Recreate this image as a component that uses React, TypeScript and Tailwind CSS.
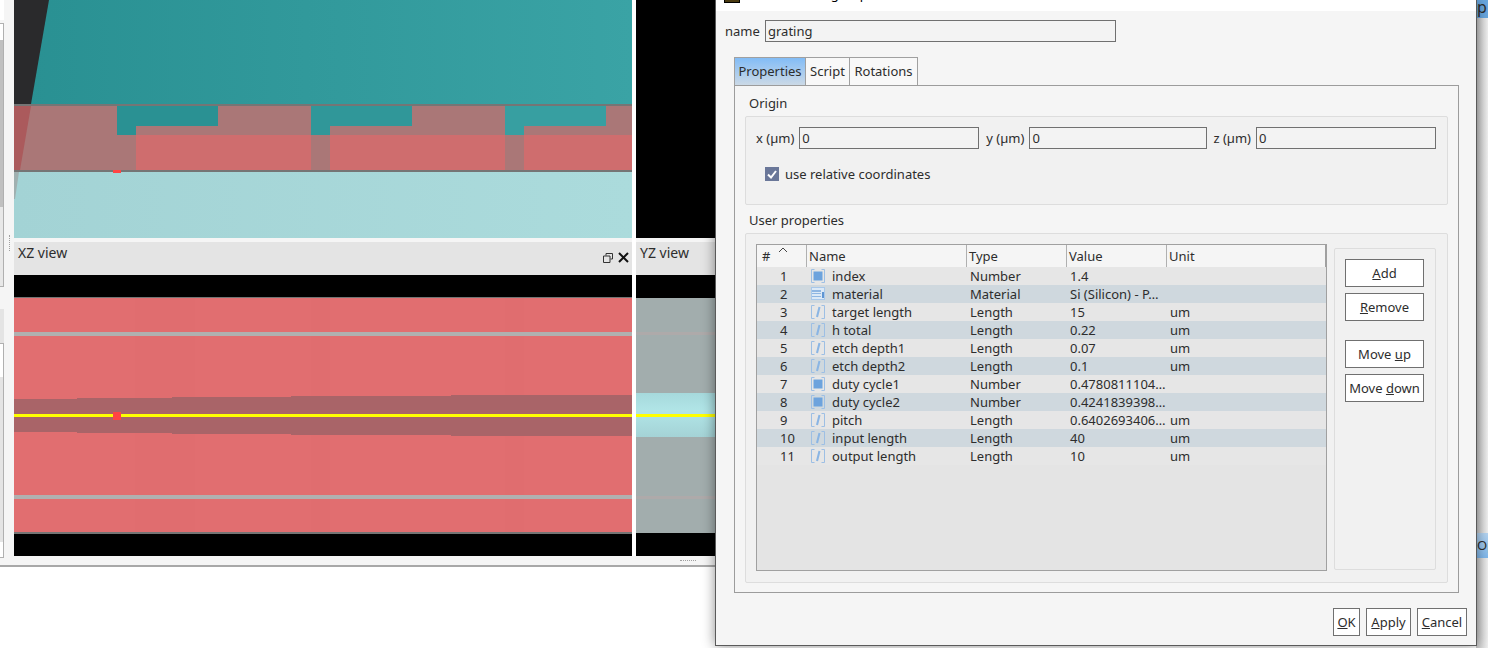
import type { ReactNode } from 'react'

const FONT = "font-['Noto_Sans','Open_Sans',sans-serif]"

type Kind = 'number' | 'material' | 'length'

const ROWS: { name: string; type: string; value: string; unit: string; kind: Kind }[] = [
  { name: 'index', type: 'Number', value: '1.4', unit: '', kind: 'number' },
  { name: 'material', type: 'Material', value: 'Si (Silicon) - P…', unit: '', kind: 'material' },
  { name: 'target length', type: 'Length', value: '15', unit: 'um', kind: 'length' },
  { name: 'h total', type: 'Length', value: '0.22', unit: 'um', kind: 'length' },
  { name: 'etch depth1', type: 'Length', value: '0.07', unit: 'um', kind: 'length' },
  { name: 'etch depth2', type: 'Length', value: '0.1', unit: 'um', kind: 'length' },
  { name: 'duty cycle1', type: 'Number', value: '0.4780811104…', unit: '', kind: 'number' },
  { name: 'duty cycle2', type: 'Number', value: '0.4241839398…', unit: '', kind: 'number' },
  { name: 'pitch', type: 'Length', value: '0.6402693406…', unit: 'um', kind: 'length' },
  { name: 'input length', type: 'Length', value: '40', unit: 'um', kind: 'length' },
  { name: 'output length', type: 'Length', value: '10', unit: 'um', kind: 'length' },
]

function RowIcon({ kind }: { kind: Kind }) {
  if (kind === 'material') {
    return (
      <svg width="15" height="14" viewBox="0 0 15 14" className="shrink-0">
        <rect x="0" y="0" width="14" height="13" fill="#a9c8ea" />
        <rect x="1" y="1" width="12" height="11" fill="#dce9f6" />
        <rect x="1" y="3" width="9" height="2" fill="#8fb6e2" />
        <rect x="1" y="6" width="9" height="1" fill="#8fb6e2" />
        <rect x="1" y="9" width="9" height="1" fill="#8fb6e2" />
        <rect x="11" y="5" width="2" height="6" fill="#5f95d2" />
      </svg>
    )
  }
  return (
    <svg width="15" height="14" viewBox="0 0 15 14" fill="none" className="shrink-0">
      <path d="M3.5 .5H.5V13.5H3.5M10.5 .5H13.5V13.5H10.5" stroke="#9dbfe4" />
      {kind === 'number' ? (
        <rect x="2.5" y="2.5" width="9" height="9" fill="#6da3dd" />
      ) : (
        <path d="M8.5 2L6 12" stroke="#8ab5e4" strokeWidth="2" />
      )}
    </svg>
  )
}

function Btn({ className, children }: { className: string; children: ReactNode }) {
  return (
    <div className={`flex h-[28px] items-center justify-center border border-[#707070] bg-white ${className}`}>
      {children}
    </div>
  )
}

function Field({ label, className }: { label: string; className: string }) {
  return (
    <>
      <span className="whitespace-nowrap">{label}</span>
      <div className={`flex h-[22px] items-center border border-[#707070] bg-[#f3f3f3] pl-[2px] ${className}`}>0</div>
    </>
  )
}

function XYView() {
  return (
    <svg width="618" height="238" viewBox="0 0 618 238" className="block">
      <defs>
        <linearGradient id="teal" x1="0" x2="1" y1="0" y2="0">
          <stop offset="0" stopColor="#299092" />
          <stop offset="1" stopColor="#3aa3a5" />
        </linearGradient>
        <linearGradient id="pale" x1="0" x2="1" y1="0" y2="0">
          <stop offset="0" stopColor="#a3d3d5" />
          <stop offset="1" stopColor="#abdbdc" />
        </linearGradient>
      </defs>
      <rect width="618" height="104" fill="url(#teal)" />
      <rect y="106" width="618" height="64" fill="#aa7777" />
      <rect y="172" width="618" height="66" fill="url(#pale)" />
      <path d="M103 106H204V126H122V135H103Z" fill="#2a9193" />
      <path d="M297 106H398V126H316V135H297Z" fill="#309799" />
      <path d="M491 106H592V126H510V135H491Z" fill="#379fa1" />
      <rect x="122" y="135" width="175" height="35" fill="#cf6d6e" />
      <rect x="316" y="135" width="175" height="35" fill="#cf6d6e" />
      <rect x="510" y="135" width="108" height="35" fill="#cf6d6e" />
      <rect y="104" width="618" height="2" fill="#757575" />
      <rect y="170" width="618" height="2" fill="#757575" />
      <path d="M0 0H35L17 104H0Z" fill="#2a2a2c" />
      <path d="M0 106H17L6 170H0Z" fill="#ab5a5c" />
      <path d="M0 172H5L1 199H0Z" fill="#a0b0b0" />
      <rect x="99" y="170" width="8" height="3" fill="#ff4444" />
    </svg>
  )
}

function XZView() {
  return (
    <svg width="618" height="237" viewBox="0 0 618 237" className="block">
      <rect width="618" height="237" fill="#e16e70" />
      <rect x="121" width="60" height="237" fill="#e06d6f" />
      <rect x="297" width="19" height="237" fill="#e06d6f" />
      <rect x="491" width="19" height="237" fill="#e06d6f" />
      <rect width="618" height="1" fill="#757575" />
      <rect y="35" width="618" height="4" fill="#b0b0b0" />
      <rect y="198" width="618" height="4" fill="#b0b0b0" />
      <path
        d="M0 102H63V101H158V100H277V99H437V98H618V139H437V138H277V137H158V136H63V135H0Z"
        fill="#a96468"
      />
      <rect y="117" width="618" height="3" fill="#ffff00" />
      <rect x="99" y="115" width="8" height="8" fill="#ff4444" />
      <rect y="235" width="618" height="2" fill="#757575" />
    </svg>
  )
}

function YZView() {
  return (
    <svg width="80" height="235" viewBox="0 0 80 235" className="block">
      <defs>
        <linearGradient id="band" x1="0" x2="0" y1="0" y2="1">
          <stop offset="0" stopColor="#a6d9dc" />
          <stop offset="0.4" stopColor="#b1e5e7" />
          <stop offset="1" stopColor="#a4d3d6" />
        </linearGradient>
      </defs>
      <rect width="80" height="235" fill="#a2adad" />
      <rect y="34" width="80" height="3" fill="#aeaaaa" />
      <rect y="198" width="80" height="3" fill="#aeaaaa" />
      <rect y="95" width="80" height="44" fill="url(#band)" />
      <rect y="116" width="80" height="3" fill="#ffff00" />
    </svg>
  )
}

function Dialog() {
  return (
    <div className="absolute left-[715px] top-0 flex h-[646px] w-[762px] flex-col border-x border-b border-[#5a5a5a] bg-[#f5f5f5] shadow-[0_0_12px_rgba(0,0,0,0.45)]">
      <div className="flex h-[11px] shrink-0 items-start gap-[5px] overflow-hidden bg-white pl-[8px]">
        <div className="h-[3px] w-[16px] border-x border-b border-black bg-[#4a3a10]" />
        <span className="mt-[-15px] whitespace-nowrap leading-[18px] text-black">Edit structure group</span>
      </div>

      <div className="mt-[9px] flex items-center pl-[9px]">
        <span className="w-[40px]">name</span>
        <div className="flex h-[22px] w-[351px] items-center border border-[#707070] bg-[#f3f3f3] pl-[2px]">grating</div>
      </div>

      <div className="ml-[18px] mt-[15px] flex h-[28px]">
        <div className="flex w-[72px] items-center justify-center border-x border-t border-[#a0a0a0] bg-gradient-to-b from-[#82bcf6] to-[#cbd9e6] pb-[2px]">Properties</div>
        <div className="flex w-[44px] items-center justify-center border-r border-t border-[#a0a0a0] bg-[#f8f8f8] pb-[2px]">Script</div>
        <div className="flex w-[68px] items-center justify-center border-r border-t border-[#a0a0a0] bg-[#f8f8f8] pb-[2px]">Rotations</div>
      </div>

      <div className="ml-[18px] flex h-[508px] w-[725px] flex-col border border-[#9c9c9c] px-[10px]">
        <div className="mt-[7px] h-[23px] pl-[4px] leading-[20px]">Origin</div>
        <div className="flex h-[89px] flex-col rounded-[2px] border border-[#dddddd] bg-[#f1f1f1] pl-[10px]">
          <div className="mt-[10px] flex items-center">
            <Field label="x (µm)" className="ml-[5px] w-[180px]" />
            <span className="w-[7px]" />
            <Field label="y (µm)" className="ml-[5px] w-[178px]" />
            <span className="w-[6px]" />
            <Field label="z (µm)" className="ml-[5px] w-[180px]" />
          </div>
          <div className="ml-[9px] mt-[16px] flex items-center gap-[6px]">
            <div className="flex h-[14px] w-[14px] items-center justify-center bg-[#6a7799]">
              <svg width="10" height="9" viewBox="0 0 10 9" fill="none">
                <path d="M1 4.5L4 7.5L9 1" stroke="#ffffff" strokeWidth="2" />
              </svg>
            </div>
            <span>use relative coordinates</span>
          </div>
        </div>

        <div className="mt-[5px] h-[23px] pl-[4px] leading-[20px]">User properties</div>
        <div className="flex h-[350px] gap-[7px] rounded-[2px] border border-[#dddddd] bg-[#f1f1f1] pl-[10px] pt-[10px]">
          <div className="flex h-[327px] w-[571px] flex-col border border-[#a0a0a0] bg-[#e4e4e4]">
            <div className="flex h-[22px] shrink-0 items-center bg-[#f5f5f5]">
              <div className="relative h-full w-[50px] border-r border-[#b0b0b0] pl-[5px] leading-[22px]">
                #
                <svg width="10" height="6" viewBox="0 0 10 6" fill="none" className="absolute left-[21px] top-[2px]">
                  <path d="M1 5L5 1L9 5" stroke="#444444" />
                </svg>
              </div>
              <div className="h-full w-[160px] border-r border-[#b0b0b0] pl-[2px] leading-[22px]">Name</div>
              <div className="h-full w-[100px] border-r border-[#b0b0b0] pl-[2px] leading-[22px]">Type</div>
              <div className="h-full w-[100px] border-r border-[#b0b0b0] pl-[2px] leading-[22px]">Value</div>
              <div className="h-full flex-1 border-r border-[#a0a0a0] pl-[2px] leading-[22px]">Unit</div>
            </div>
            {ROWS.map((r, i) => (
              <div key={r.name} className={`flex h-[18px] items-center ${i % 2 ? 'bg-[#cfd8de]' : 'bg-[#e6e6e6]'}`}>
                <div className="w-[54px] pl-[23px]">{i + 1}</div>
                <div className="w-[21px]"><RowIcon kind={r.kind} /></div>
                <div className="w-[138px] whitespace-nowrap">{r.name}</div>
                <div className="w-[100px]">{r.type}</div>
                <div className="w-[100px] whitespace-nowrap">{r.value}</div>
                <div>{r.unit}</div>
              </div>
            ))}
          </div>

          <div className="mt-[4px] flex h-[322px] w-[102px] flex-col rounded-[2px] border border-[#dddddd] px-[10px] pt-[10px]">
            <Btn className="w-[79px]"><span><u>A</u>dd</span></Btn>
            <Btn className="mt-[6px] w-[79px]"><span><u>R</u>emove</span></Btn>
            <Btn className="mt-[19px] w-[79px]"><span>Move <u>u</u>p</span></Btn>
            <Btn className="mt-[6px] w-[79px]"><span>Move <u>d</u>own</span></Btn>
          </div>
        </div>
      </div>

      <div className="mt-[15px] flex justify-end gap-[6px] pr-[9px]">
        <Btn className="w-[27px]"><span><u>O</u>K</span></Btn>
        <Btn className="w-[45px]"><span><u>A</u>pply</span></Btn>
        <Btn className="w-[50px]"><span><u>C</u>ancel</span></Btn>
      </div>
    </div>
  )
}

// cut-off panels at the far left of the main window
function LeftSliver() {
  return (
    <div className="flex w-[14px] shrink-0">
      <div className="flex w-[4px] flex-col">
        <div className="h-[20px] bg-white" />
        <div className="mt-[3px] flex h-[264px] flex-col border-y border-r border-[#b0b0b0]">
          <div className="h-[16px] bg-white" />
          <div className="h-[167px] bg-[#c0c0c0]" />
          <div className="flex-1 bg-[#e8e8e8]" />
        </div>
        <div className="mt-[22px] h-[34px] bg-[#e4e4e4]" />
        <div className="flex h-[215px] flex-col border-y border-r border-[#b0b0b0] bg-white">
          <div className="h-[33px]" />
          <div className="h-[165px] bg-[#e4e4e4]" />
        </div>
      </div>
      <div className="flex flex-1 flex-col items-center pt-[235px]">
        <div className="h-[16px] w-[1px] border-l border-dotted border-[#a0a0a0]" />
      </div>
    </div>
  )
}

export default function App() {
  return (
    <div className={`relative flex h-[648px] w-[1488px] overflow-hidden bg-white text-[13px] leading-[18px] text-[#2d2d2d] ${FONT}`}>
      <div className="w-[1476px] shrink-0">
        <div className="relative flex h-[567px] border-b-2 border-[#a8a8a8] bg-[#f5f5f5]">
          <LeftSliver />

          <div className="w-[618px] shrink-0">
            <XYView />
            <div className="h-[4px]" />
            <div className="flex h-[33px] justify-between bg-[#e4e4e4] pl-[4px] pr-[3px]">
              <span className="text-[14px] leading-[22px]">XZ view</span>
              <div className="mt-[10px] flex items-start gap-[5px]">
                <svg width="10" height="10" viewBox="0 0 10 10" fill="none" className="mt-[1px]">
                  <path d="M3 2.5V.5H9.5V6H7.5M.5 3H7V9.5H.5Z" stroke="#333333" />
                </svg>
                <svg width="11" height="11" viewBox="0 0 11 11" fill="none">
                  <path d="M1 1L10 10M10 1L1 10" stroke="#111111" strokeWidth="2" />
                </svg>
              </div>
            </div>
            <div className="h-[22px] bg-black" />
            <XZView />
            <div className="h-[22px] bg-black" />
          </div>

          <div className="h-[556px] w-[4px] shrink-0 bg-white" />

          <div className="w-[80px] shrink-0">
            <div className="h-[238px] bg-black" />
            <div className="h-[4px]" />
            <div className="h-[33px] bg-[#e4e4e4] pl-[4px] text-[14px] leading-[22px]">YZ view</div>
            <div className="h-[23px] bg-black" />
            <YZView />
            <div className="h-[23px] bg-black" />
          </div>

          {/* splitter grip */}
          <div className="absolute left-[680px] top-[560px] h-[2px] w-[16px] border-t border-dotted border-[#a0a0a0]" />
        </div>
      </div>

      {/* what shows of the window behind, right of the dialog */}
      <div className="flex w-[12px] shrink-0 flex-col bg-gradient-to-r from-[#c4c4c4] to-[#f0f0f0]">
        <div className="h-[18px] overflow-hidden bg-[#6aa8e0] pl-[1px] text-[16px] leading-[14px]">p</div>
        <div className="mt-[515px] h-[25px] overflow-hidden whitespace-nowrap bg-gradient-to-b from-[#b5d5f2] to-[#80b8ec] pl-[1px] leading-[25px]">Op</div>
      </div>

      <Dialog />
    </div>
  )
}
